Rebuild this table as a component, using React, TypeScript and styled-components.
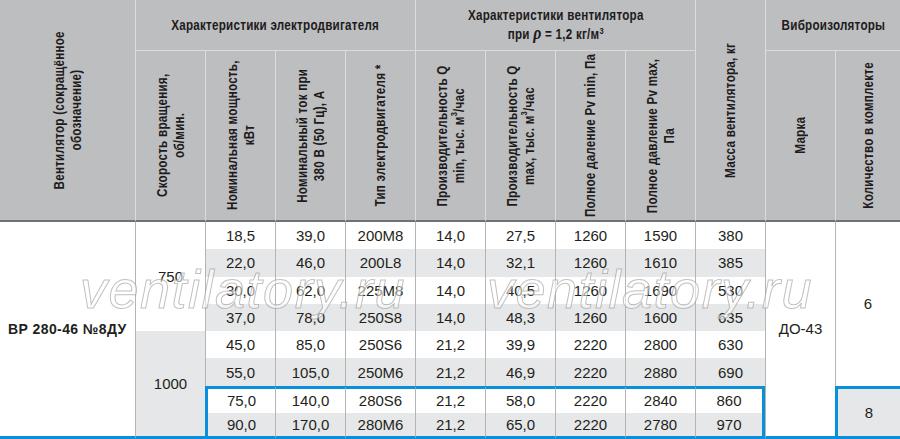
import React from "react";
import styled, { createGlobalStyle } from "styled-components";

const BLUE = "#0a8fdc";
const LINE = "#b4b4b4";
const HEAD_LINE = "#dcdcdc";
const STRIPE = "#e6e7e8";

const GlobalStyle = createGlobalStyle`
  html, body {
    margin: 0;
    padding: 0;
    background: #ffffff;
    overflow: hidden;
  }
  body {
    font-family: "Liberation Sans", Arial, sans-serif;
    color: #231f20;
  }
`;

const Sheet = styled.div`
  position: relative;
  width: 900px;
  height: 439px;
  display: grid;
  grid-template-columns: 135px repeat(10, 70px) 65px;
  grid-template-rows: 51px 171px repeat(6, 27.3px) 27.2px 26px;
  overflow: hidden;
`;

interface PlaceProps {
  $col: string;
  $row: string;
}

const HeadCell = styled.div<PlaceProps & { $group?: boolean; $first?: boolean }>`
  grid-column: ${(p) => p.$col};
  grid-row: ${(p) => p.$row};
  box-sizing: border-box;
  background: #bdbec0;
  display: flex;
  align-items: center;
  justify-content: center;
  text-align: center;
  font-family: "Liberation Sans", Arial, sans-serif;
  font-weight: 700;
  font-size: 14px;
  line-height: 17px;
  letter-spacing: 0.3px;
  color: #1d1b1c;
  white-space: nowrap;
  border-left: ${(p) => (p.$first ? "none" : `1px solid ${HEAD_LINE}`)};
  border-bottom: ${(p) =>
    p.$group ? `1px solid ${HEAD_LINE}` : "2px solid #717173"};
`;

// the source uses a condensed face: squeeze along the run of the text
const Narrow = styled.span`
  display: inline-block;
  transform: scaleX(0.83);
`;

const Vertical = styled.span`
  writing-mode: vertical-rl;
  transform: rotate(180deg) scaleY(0.83);
`;

const Rho = styled.span`
  font-family: "Liberation Serif", serif;
  font-style: italic;
  font-size: 19px;
  font-weight: 700;
`;

const Sup = styled.sup`
  font-size: 9px;
  line-height: 0;
  vertical-align: 5px;
`;

interface CellProps extends PlaceProps {
  $tone?: "white" | "gray";
  $first?: boolean;
  $bt?: boolean;
  $bl?: boolean;
  $br?: boolean;
  $bb?: boolean;
  $bold?: boolean;
  $left?: boolean;
}

const Cell = styled.div<CellProps>`
  grid-column: ${(p) => p.$col};
  grid-row: ${(p) => p.$row};
  box-sizing: border-box;
  display: flex;
  align-items: center;
  justify-content: ${(p) => (p.$left ? "flex-start" : "center")};
  padding-left: ${(p) => (p.$left ? "8px" : "0")};
  background: ${(p) => (p.$tone === "gray" ? STRIPE : "#ffffff")};
  font-size: ${(p) => (p.$bold ? "14px" : "15px")};
  font-weight: ${(p) => (p.$bold ? 700 : 400)};
  letter-spacing: ${(p) => (p.$bold ? "0.4px" : "0")};
  color: #231f20;
  border-left: ${(p) =>
    p.$bl ? `3px solid ${BLUE}` : p.$first ? "none" : `1px solid ${LINE}`};
  border-top: ${(p) => (p.$bt ? `3px solid ${BLUE}` : "none")};
  border-right: ${(p) => (p.$br ? `3px solid ${BLUE}` : "none")};
  border-bottom: ${(p) => (p.$bb ? `3px solid ${BLUE}` : "none")};
`;

const Watermark = styled.span<{ $x: number }>`
  position: absolute;
  top: 262px;
  left: ${(p) => p.$x}px;
  font-family: "Liberation Sans", Arial, sans-serif;
  font-style: italic;
  font-size: 54px;
  line-height: 54px;
  letter-spacing: 1.5px;
  color: rgba(255, 255, 255, 0.55);
  -webkit-text-stroke: 1px rgba(150, 150, 150, 0.6);
  pointer-events: none;
  white-space: nowrap;
`;

const rows: string[][] = [
  ["18,5", "39,0", "200M8", "14,0", "27,5", "1260", "1590", "380"],
  ["22,0", "46,0", "200L8", "14,0", "32,1", "1260", "1610", "385"],
  ["30,0", "62,0", "225M8", "14,0", "40,5", "1260", "1690", "530"],
  ["37,0", "78,0", "250S8", "14,0", "48,3", "1260", "1600", "635"],
  ["45,0", "85,0", "250S6", "21,2", "39,9", "2220", "2800", "630"],
  ["55,0", "105,0", "250M6", "21,2", "46,9", "2220", "2880", "690"],
  ["75,0", "140,0", "280S6", "21,2", "58,0", "2220", "2840", "860"],
  ["90,0", "170,0", "280M6", "21,2", "65,0", "2220", "2780", "970"],
];

// selected configuration: last two rows
const PICKED = 6;

const App = () => {
  return (
    <>
      <GlobalStyle />
      <Sheet>
        <HeadCell $col="1 / 2" $row="1 / 3" $first>
          <Vertical>
            Вентилятор (сокращённое
            <br />
            обозначение)
          </Vertical>
        </HeadCell>
        <HeadCell $col="2 / 6" $row="1 / 2" $group>
          <Narrow>Характеристики электродвигателя</Narrow>
        </HeadCell>
        <HeadCell $col="6 / 10" $row="1 / 2" $group>
          <Narrow>
            Характеристики вентилятора
            <br />
            при <Rho>ρ</Rho> = 1,2 кг/м<Sup>3</Sup>
          </Narrow>
        </HeadCell>
        <HeadCell $col="10 / 11" $row="1 / 3">
          <Vertical>Масса вентилятора, кг</Vertical>
        </HeadCell>
        <HeadCell $col="11 / 13" $row="1 / 2" $group>
          <Narrow>Виброизоляторы</Narrow>
        </HeadCell>

        <HeadCell $col="2 / 3" $row="2 / 3">
          <Vertical>
            Скорость вращения,
            <br />
            об/мин.
          </Vertical>
        </HeadCell>
        <HeadCell $col="3 / 4" $row="2 / 3">
          <Vertical>
            Номинальная мощность,
            <br />
            кВт
          </Vertical>
        </HeadCell>
        <HeadCell $col="4 / 5" $row="2 / 3">
          <Vertical>
            Номинальный ток при
            <br />
            380 В (50 Гц), А
          </Vertical>
        </HeadCell>
        <HeadCell $col="5 / 6" $row="2 / 3">
          <Vertical>Тип электродвигателя *</Vertical>
        </HeadCell>
        <HeadCell $col="6 / 7" $row="2 / 3">
          <Vertical>
            Производительность Q
            <br />
            min, тыс. м<Sup>3</Sup>/час
          </Vertical>
        </HeadCell>
        <HeadCell $col="7 / 8" $row="2 / 3">
          <Vertical>
            Производительность Q
            <br />
            max, тыс. м<Sup>3</Sup>/час
          </Vertical>
        </HeadCell>
        <HeadCell $col="8 / 9" $row="2 / 3">
          <Vertical>Полное даление Pv min, Па</Vertical>
        </HeadCell>
        <HeadCell $col="9 / 10" $row="2 / 3">
          <Vertical>
            Полное давление Pv max,
            <br />
            Па
          </Vertical>
        </HeadCell>
        <HeadCell $col="11 / 12" $row="2 / 3">
          <Vertical>Марка</Vertical>
        </HeadCell>
        <HeadCell $col="12 / 13" $row="2 / 3">
          <Vertical>Количество в комплекте</Vertical>
        </HeadCell>

        <Cell $col="1 / 2" $row="3 / 11" $first $left $bold $bb>
          ВР 280-46 №8ДУ
        </Cell>
        <Cell $col="2 / 3" $row="3 / 7">
          750
        </Cell>
        <Cell $col="2 / 3" $row="7 / 11" $tone="gray" $bb>
          1000
        </Cell>

        {rows.map((row, i) =>
          row.map((value, j) => {
            const picked = i >= PICKED;
            return (
              <Cell
                key={`${i}-${j}`}
                $col={`${3 + j} / ${4 + j}`}
                $row={`${3 + i} / ${4 + i}`}
                $tone={i % 2 === 1 ? "gray" : "white"}
                $bt={i === PICKED}
                $bl={picked && j === 0}
                $br={picked && j === row.length - 1}
                $bb={i === rows.length - 1}
              >
                {value}
              </Cell>
            );
          })
        )}

        <Cell $col="11 / 12" $row="3 / 11" $bb>
          ДО-43
        </Cell>
        <Cell $col="12 / 13" $row="3 / 9">
          6
        </Cell>
        <Cell $col="12 / 13" $row="9 / 11" $tone="gray" $bt $bl $bb>
          8
        </Cell>

        <Watermark $x={80}>ventilatory.ru</Watermark>
        <Watermark $x={487}>ventilatory.ru</Watermark>
      </Sheet>
    </>
  );
};

export default App;
